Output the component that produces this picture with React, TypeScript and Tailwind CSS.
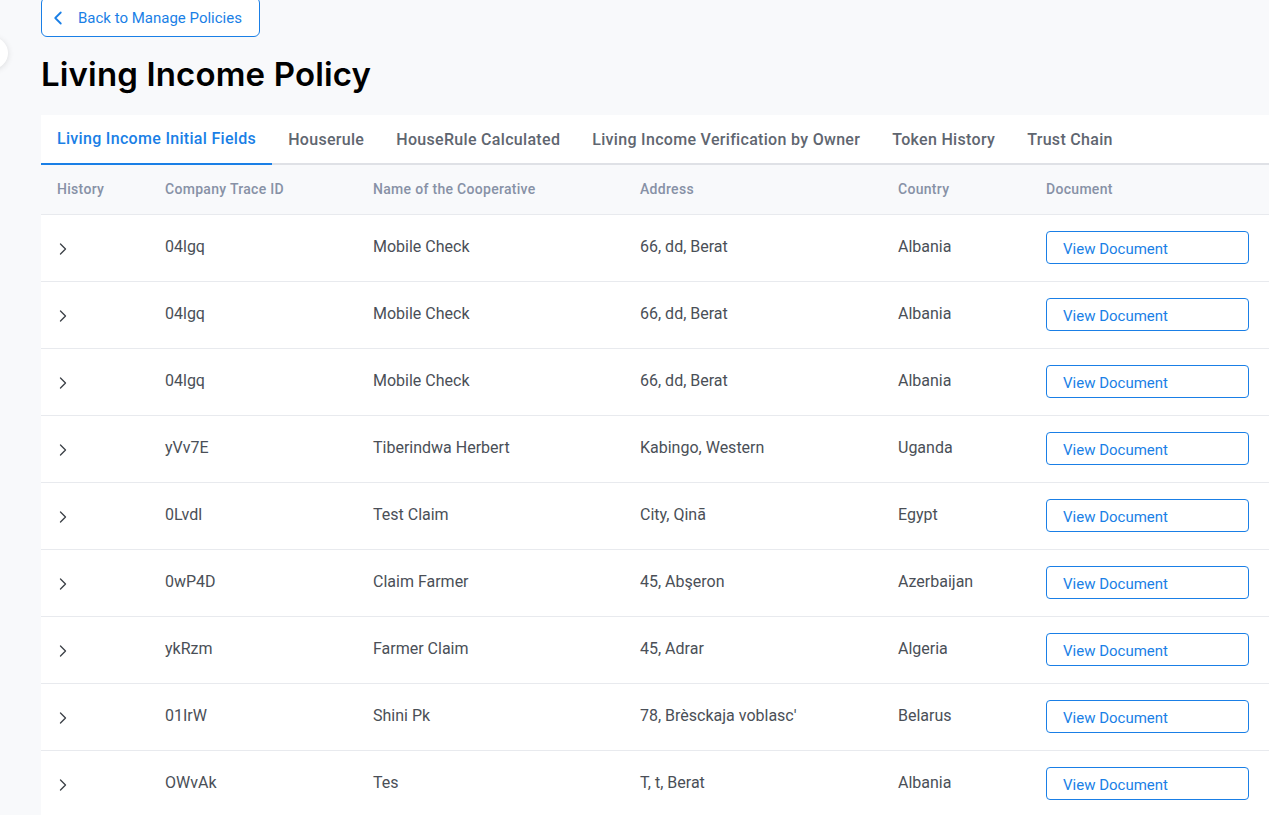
import { ChevronLeft, ChevronRight } from "lucide-react";

const TABS = [
  "Living Income Initial Fields",
  "Houserule",
  "HouseRule Calculated",
  "Living Income Verification by Owner",
  "Token History",
  "Trust Chain",
];

const ROWS = [
  { id: "04lgq", name: "Mobile Check", address: "66, dd, Berat", country: "Albania" },
  { id: "04lgq", name: "Mobile Check", address: "66, dd, Berat", country: "Albania" },
  { id: "04lgq", name: "Mobile Check", address: "66, dd, Berat", country: "Albania" },
  { id: "yVv7E", name: "Tiberindwa Herbert", address: "Kabingo, Western", country: "Uganda" },
  { id: "0Lvdl", name: "Test Claim", address: "City, Qinā", country: "Egypt" },
  { id: "0wP4D", name: "Claim Farmer", address: "45, Abşeron", country: "Azerbaijan" },
  { id: "ykRzm", name: "Farmer Claim", address: "45, Adrar", country: "Algeria" },
  { id: "01IrW", name: "Shini Pk", address: "78, Brèsckaja voblasc'", country: "Belarus" },
  { id: "OWvAk", name: "Tes", address: "T, t, Berat", country: "Albania" },
];

const COLS = "grid grid-cols-[108px_208px_267px_258px_148px_1fr]";

export default function App() {
  return (
    <div className="relative min-h-[815px] overflow-hidden bg-[#f8f9fb] pl-[41px] font-['Roboto',sans-serif]">
      <div className="absolute left-[-24px] top-[37px] h-8 w-8 rounded-full bg-white shadow-[0_1px_6px_rgba(0,0,0,0.12)]" />

      <button className="-mt-[3px] flex h-10 w-[219px] items-center gap-[9px] rounded-md border border-[#1a7fe6] bg-white pl-[5px] pt-[2px] text-[15px] text-[#1a7fe6]">
        <ChevronLeft size={22} strokeWidth={2} />
        Back to Manage Policies
      </button>

      <h1 className="mt-[16px] h-[42px] font-['Inter',sans-serif] text-[33px] font-semibold leading-[42px] tracking-[0.15px] text-black">
        Living Income Policy
      </h1>

      <div className="mt-[20px] bg-white">
        <div className="flex h-[50px] border-b-2 border-[#dfe1e6]">
          {TABS.map((t, i) => (
            <div
              key={t}
              className={`-mb-[2px] flex items-center px-4 text-[16px] font-medium tracking-[0.31px] ${
                i === 0
                  ? "border-b-2 border-[#1a7fe6] text-[#1a7fe6]"
                  : "text-[#5f6670]"
              }`}
            >
              {t}
            </div>
          ))}
        </div>

        <div className={`${COLS} h-[50px] items-center border-b border-[#e8eaee] bg-[#f8f9fb] text-[14px] font-medium tracking-[0.3px] text-[#8791a6]`}>
          <div className="pl-4">History</div>
          <div className="pl-4">Company Trace ID</div>
          <div className="pl-4">Name of the Cooperative</div>
          <div className="pl-4">Address</div>
          <div className="pl-4">Country</div>
          <div className="pl-4">Document</div>
        </div>

        {ROWS.map((r, i) => (
          <div
            key={i}
            className={`${COLS} h-[67px] items-center border-b border-[#e8eaee] pb-[2px] text-[16px] text-[#4a4f57]`}
          >
            <div className="pl-3 pt-[3px] text-[#3d4148]">
              <ChevronRight size={20} strokeWidth={1.6} />
            </div>
            <div className="pl-4">{r.id}</div>
            <div className="pl-4">{r.name}</div>
            <div className="pl-4">{r.address}</div>
            <div className="pl-4">{r.country}</div>
            <div className="pl-4">
              <button className="mt-[1px] flex h-[33px] w-[203px] items-center rounded border border-[#1a7fe6] pl-4 pt-[3px] text-[15px] text-[#1a7fe6]">
                View Document
              </button>
            </div>
          </div>
        ))}
      </div>
    </div>
  );
}
